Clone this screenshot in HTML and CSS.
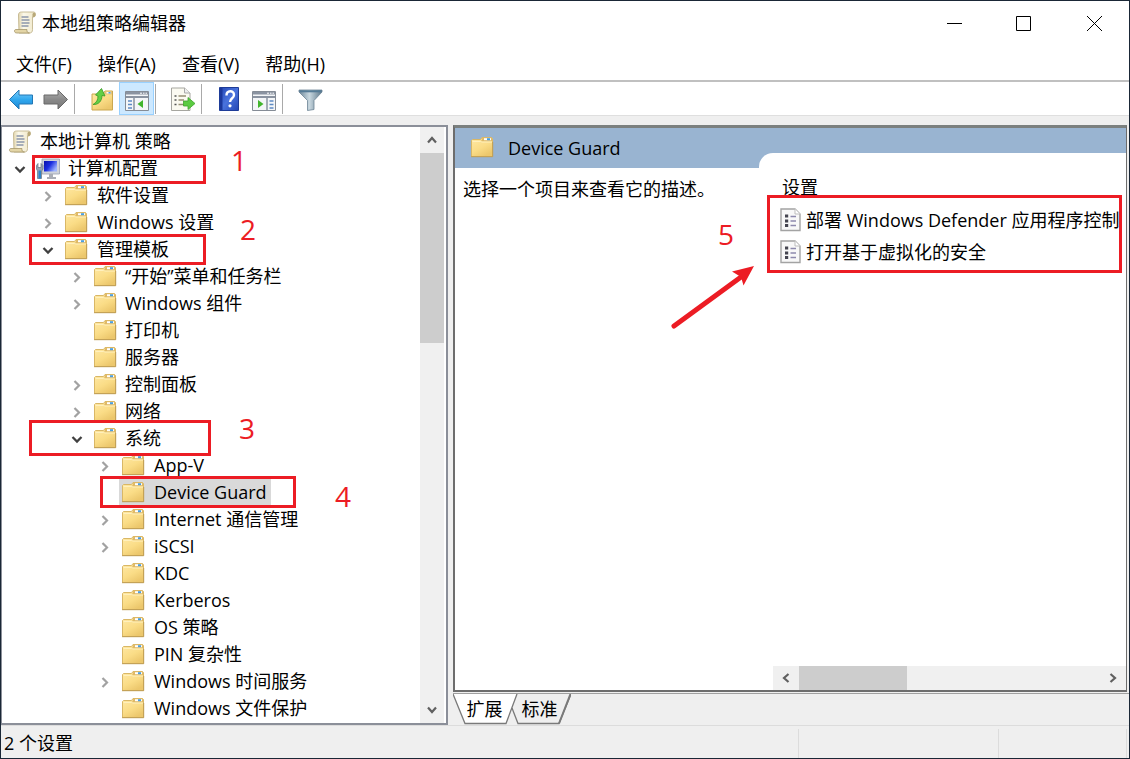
FILE: index.html
```html
<!DOCTYPE html>
<html lang="zh-CN">
<head>
<meta charset="utf-8">
<title>本地组策略编辑器</title>
<link rel="stylesheet" href="styles.css">
</head>
<body>
<svg class="defs" aria-hidden="true">
  <defs>
    <linearGradient id="gFolder" x1="0" y1="0" x2="0.6" y2="1"><stop offset="0" stop-color="#ffe9a6"/><stop offset="0.6" stop-color="#fadc86"/><stop offset="1" stop-color="#ecc76c"/></linearGradient>
    <linearGradient id="gBlue" x1="0" y1="0" x2="0" y2="1"><stop offset="0" stop-color="#7fd0fb"/><stop offset="0.5" stop-color="#31a8ee"/><stop offset="1" stop-color="#1c86d3"/></linearGradient>
    <linearGradient id="gGray" x1="0" y1="0" x2="0" y2="1"><stop offset="0" stop-color="#b0b0b0"/><stop offset="0.5" stop-color="#8a8a8a"/><stop offset="1" stop-color="#777"/></linearGradient>
    <linearGradient id="gHelp" x1="0" y1="0" x2="1" y2="1"><stop offset="0" stop-color="#2447b5"/><stop offset="0.5" stop-color="#4a73dd"/><stop offset="1" stop-color="#2346b4"/></linearGradient>
    <linearGradient id="gScreen" x1="0" y1="0" x2="1" y2="0.6"><stop offset="0" stop-color="#0810a8"/><stop offset="0.5" stop-color="#1a2ee0"/><stop offset="1" stop-color="#9db4ff"/></linearGradient>
    <linearGradient id="gFunnel" x1="0" y1="0" x2="1" y2="0"><stop offset="0" stop-color="#6d8799"/><stop offset="0.45" stop-color="#c9d8e0"/><stop offset="1" stop-color="#5d7789"/></linearGradient>
    <linearGradient id="gPaper" x1="0" y1="0" x2="1" y2="0"><stop offset="0" stop-color="#e2d6ae"/><stop offset="0.3" stop-color="#fbf8ea"/><stop offset="1" stop-color="#efe7c8"/></linearGradient>
  </defs>
  <symbol id="folder" viewBox="0 0 24 24">
    <path d="M1.500 4.500L2.500 3.500h8L12 1.500h9.500l1 1V20.500h-21z" fill="url(#gFolder)" stroke="#d9b766" stroke-width="1"/>
    <path d="M12.500 1.500h9l.5 1v3H11z" fill="#dfb967"/>
    <path d="M14 2.200h7v2h-7z" fill="#fff"/><path d="M17 2.200h3v2h-3z" fill="#4a9fe0"/>
    <path d="M2.500 5.500h8L12 6h10" fill="none" stroke="#fff0bd"/>
    <path d="M1 20.700h21.700V6" fill="none" stroke="#bf9d54" stroke-width="1"/>
  </symbol>
  <symbol id="scroll" viewBox="0 0 24 24">
    <path d="M5.500 4c0-2 1-3 3-3H21c2 .5 2 4 0 5h-1.500v12.500c0 2.500-1 3.500-3 3.500H6z" fill="url(#gPaper)" stroke="#bcae84" stroke-width="0.800"/>
    <path d="M19.500 6V3.500C19.500 1 22.500 1 22.500 3.500c0 1.500-.5 2.500-1.500 2.500z" fill="#b8a878"/>
    <path d="M1.500 20c0-1 .5-1.500 1.500-1.500h11c-.5 2 .5 3.500 2.500 3.500H4c-2 0-2.500-1-2.500-2z" fill="#e3d5a6" stroke="#a6976b" stroke-width="0.800"/>
    <path d="M8.500 6h7M8.500 9h8M8.500 12h8M8.500 15h7" stroke="#8c96aa" stroke-width="1.300"/>
  </symbol>
  <symbol id="computer" viewBox="0 0 24 24">
    <path d="M6 2h17.500v15H6z" fill="#cfd3da" stroke="#98a1b3" stroke-width="0.800"/>
    <path d="M8 4h13v10.500H8z" fill="url(#gScreen)"/>
    <path d="M13 17h4v3h3v2h-9v-2h2z" fill="#a9adb6"/>
    <path d="M.5 8.500l1.500-2v4h3v-4L7 8.500v3.500L5.500 14v7.500h-4V14L.5 12z" fill="#9aa6b3" stroke="#66727f" stroke-width="0.700"/>
    <path d="M2.500 13.500H5v8H2.500z" fill="#2f84c9"/>
  </symbol>
  <symbol id="setting" viewBox="0 0 21 24">
    <path d="M1 1h14l5 5v16.500H1z" fill="#f8f8f8" stroke="#a3a3a3" stroke-width="1.400"/>
    <path d="M15 1v5h5" fill="#fff" stroke="#bdbdbd"/>
    <path d="M5 6.500h3.200v3H5zM5 11.500h3.200v3H5zM5 16h3.200v3H5z" fill="#44444f"/>
    <path d="M10.500 8.500H16M10.500 13H16M10.500 17.500H16" stroke="#8d89ad" stroke-width="1.300"/>
  </symbol>
  <symbol id="down" viewBox="0 0 16 16"><path d="M3.500 6L8 10.500 12.500 6" fill="none" stroke="#404040" stroke-width="2.300"/></symbol>
  <symbol id="right" viewBox="0 0 16 16"><path d="M5.500 4L10 8.500 5.500 13" fill="none" stroke="#a2a2a2" stroke-width="2.200"/></symbol>
  <symbol id="chev" viewBox="0 0 16 16"><path d="M4 10.500L8 6l4 4.500" fill="none" stroke="#606060" stroke-width="2.200"/></symbol>
</svg>

<div class="window">
  <header class="titlebar">
    <svg class="icon24"><use href="#scroll"/></svg>
    <h1 class="title">本地组策略编辑器</h1>
    <div class="controls">
      <button class="control" aria-label="最小化"><svg viewBox="0 0 16 16"><path d="M1 8.500h15" stroke="#000"/></svg></button>
      <button class="control" aria-label="最大化"><svg viewBox="0 0 16 16"><path d="M.5 1.500h14v14H.5z" fill="none" stroke="#000"/></svg></button>
      <button class="control" aria-label="关闭"><svg viewBox="0 0 16 16"><path d="M1 1l15 15M16 1L1 16" stroke="#000"/></svg></button>
    </div>
  </header>
  <nav class="menubar">
    <button class="menu">文件(F)</button>
    <button class="menu">操作(A)</button>
    <button class="menu">查看(V)</button>
    <button class="menu">帮助(H)</button>
  </nav>
  <div class="toolbar" role="toolbar">
    <button class="tool" aria-label="后退"><svg viewBox="0 0 26 24"><path d="M1.500 12.500L11 3v5h13.500v9H11v5z" fill="url(#gBlue)" stroke="#2377b4"/></svg></button>
    <button class="tool" aria-label="前进"><svg viewBox="0 0 26 24"><path d="M24.500 12.500L15 3v5H1v9h14v5z" fill="url(#gGray)" stroke="#686868"/></svg></button>
    <span class="divider"></span>
    <button class="tool" aria-label="上一级"><svg viewBox="0 0 26 24"><path d="M3 7h11l2-3h7.500v19H3z" fill="url(#gFolder)" stroke="#cba850"/><path d="M16 4.500h7v3h-8.500z" fill="#e5c57c"/><path d="M17.500 5h4v1.500h-4z" fill="#fff"/><path d="M19.500 5h2v1.500h-2z" fill="#4a9fe0"/><path d="M4 17.500c3.500-2 5-4.500 5-8.500L6.500 8 12.500 1.500 16 9l-3-.5C13 14 9.500 18 4 17.500z" fill="#62cf45" stroke="#379b26" stroke-width="0.800"/></svg></button>
    <button class="tool pressed" aria-label="显示/隐藏控制台树" aria-pressed="true"><svg viewBox="0 0 26 24"><path d="M1.500 4.500h23v19h-23z" fill="#f4f6f8" stroke="#858c96"/><path d="M2 5h22v2.500H2z" fill="#8a93a1"/><path d="M2 10h22" stroke="#8a93a1" stroke-width="2"/><path d="M16 6.200h2M19 6.200h1.500M21.500 6.200H23" stroke="#fff"/><path d="M10 11v12" stroke="#8a93a1" stroke-width="1.500"/><path d="M4 14h4M4 17.500h4M4 21h4" stroke="#5d8bc4" stroke-width="1.500"/><path d="M19 13v8l-5.500-4z" fill="#41b52c"/></svg></button>
    <span class="divider"></span>
    <button class="tool" aria-label="导出列表"><svg viewBox="0 0 26 24"><path d="M1.500 1h13L20 6v17.500H1.500z" fill="#fbfaf1" stroke="#a6a6a0"/><path d="M14.500 1v5H20" fill="#eee" stroke="#aaa"/><path d="M4.500 9h2M4.500 13h2M4.500 17.500h2" stroke="#555" stroke-width="1.600"/><path d="M8.500 9H16M8.500 13H14M8.500 17.500H14" stroke="#968f73" stroke-width="1.400"/><path d="M13.500 14h4.500v-3.500l7 6-7 6V19h-4.500z" fill="#5bcb41" stroke="#3fa32c" stroke-width="0.800"/></svg></button>
    <span class="divider"></span>
    <button class="tool" aria-label="帮助"><svg viewBox="0 0 26 24"><path d="M3.500.500h19v23h-19z" fill="url(#gHelp)" stroke="#1e3c98"/><path d="M4 1h2.500v22H4z" fill="#1c389c"/><path d="M10.500 8.500c0-5.500 7.500-5.500 7.500-.500 0 3.500-4 3-4 7" fill="none" stroke="#fff" stroke-width="2.400"/><circle cx="14" cy="18.800" r="1.600" fill="#fff"/></svg></button>
    <button class="tool" aria-label="显示/隐藏操作窗格"><svg viewBox="0 0 26 24"><path d="M1.500 4.500h23v19h-23z" fill="#f4f6f8" stroke="#858c96"/><path d="M2 5h22v2.500H2z" fill="#8a93a1"/><path d="M2 10h22" stroke="#8a93a1" stroke-width="2"/><path d="M16 6.200h2M19 6.200h1.500M21.500 6.200H23" stroke="#fff"/><path d="M16 11v12" stroke="#8a93a1" stroke-width="1.500"/><path d="M18.500 14h4M18.500 17.500h4M18.500 21h4" stroke="#5d8bc4" stroke-width="1.500"/><path d="M7 13v8l5.500-4z" fill="#41b52c"/></svg></button>
    <span class="divider"></span>
    <button class="tool" aria-label="筛选"><svg viewBox="0 0 26 24"><path d="M2 3h23v2l-8 8.500v9l-6.500 1v-10L2 5z" fill="url(#gFunnel)" stroke="#6d8495" stroke-width="0.800"/><path d="M2.500 3.300h22v2h-22z" fill="#557b96"/></svg></button>
  </div>

  <main class="workspace">
    <section class="tree-pane">
      <ul class="tree" role="tree">
        <li class="row root"><span class="node"><svg class="icon24"><use href="#scroll"/></svg>本地计算机 策略</span></li>
        <li class="row d1"><button class="expander" aria-label="折叠"><svg><use href="#down"/></svg></button><span class="node"><svg class="icon24"><use href="#computer"/></svg>计算机配置</span></li>
        <li class="row d2"><button class="expander" aria-label="展开"><svg><use href="#right"/></svg></button><span class="node"><svg class="icon24"><use href="#folder"/></svg>软件设置</span></li>
        <li class="row d2"><button class="expander" aria-label="展开"><svg><use href="#right"/></svg></button><span class="node"><svg class="icon24"><use href="#folder"/></svg>Windows 设置</span></li>
        <li class="row d2"><button class="expander" aria-label="折叠"><svg><use href="#down"/></svg></button><span class="node"><svg class="icon24"><use href="#folder"/></svg>管理模板</span></li>
        <li class="row d3"><button class="expander" aria-label="展开"><svg><use href="#right"/></svg></button><span class="node"><svg class="icon24"><use href="#folder"/></svg>“开始”菜单和任务栏</span></li>
        <li class="row d3"><button class="expander" aria-label="展开"><svg><use href="#right"/></svg></button><span class="node"><svg class="icon24"><use href="#folder"/></svg>Windows 组件</span></li>
        <li class="row d3"><span class="expander"></span><span class="node"><svg class="icon24"><use href="#folder"/></svg>打印机</span></li>
        <li class="row d3"><span class="expander"></span><span class="node"><svg class="icon24"><use href="#folder"/></svg>服务器</span></li>
        <li class="row d3"><button class="expander" aria-label="展开"><svg><use href="#right"/></svg></button><span class="node"><svg class="icon24"><use href="#folder"/></svg>控制面板</span></li>
        <li class="row d3"><button class="expander" aria-label="展开"><svg><use href="#right"/></svg></button><span class="node"><svg class="icon24"><use href="#folder"/></svg>网络</span></li>
        <li class="row d3"><button class="expander" aria-label="折叠"><svg><use href="#down"/></svg></button><span class="node"><svg class="icon24"><use href="#folder"/></svg>系统</span></li>
        <li class="row d4"><button class="expander" aria-label="展开"><svg><use href="#right"/></svg></button><span class="node"><svg class="icon24"><use href="#folder"/></svg>App-V</span></li>
        <li class="row d4"><span class="expander"></span><span class="node selected"><svg class="icon24"><use href="#folder"/></svg>Device Guard</span></li>
        <li class="row d4"><button class="expander" aria-label="展开"><svg><use href="#right"/></svg></button><span class="node"><svg class="icon24"><use href="#folder"/></svg>Internet 通信管理</span></li>
        <li class="row d4"><button class="expander" aria-label="展开"><svg><use href="#right"/></svg></button><span class="node"><svg class="icon24"><use href="#folder"/></svg>iSCSI</span></li>
        <li class="row d4"><span class="expander"></span><span class="node"><svg class="icon24"><use href="#folder"/></svg>KDC</span></li>
        <li class="row d4"><span class="expander"></span><span class="node"><svg class="icon24"><use href="#folder"/></svg>Kerberos</span></li>
        <li class="row d4"><span class="expander"></span><span class="node"><svg class="icon24"><use href="#folder"/></svg>OS 策略</span></li>
        <li class="row d4"><span class="expander"></span><span class="node"><svg class="icon24"><use href="#folder"/></svg>PIN 复杂性</span></li>
        <li class="row d4"><button class="expander" aria-label="展开"><svg><use href="#right"/></svg></button><span class="node"><svg class="icon24"><use href="#folder"/></svg>Windows 时间服务</span></li>
        <li class="row d4"><span class="expander"></span><span class="node"><svg class="icon24"><use href="#folder"/></svg>Windows 文件保护</span></li>
      </ul>
      <div class="vscroll">
        <button class="arrow" aria-label="向上滚动"><svg><use href="#chev"/></svg></button>
        <div class="vtrack"><div class="vthumb"></div></div>
        <button class="arrow to-down" aria-label="向下滚动"><svg><use href="#chev"/></svg></button>
      </div>
    </section>

    <section class="detail-pane">
      <div class="detail">
        <div class="summary">
          <h2 class="detail-title"><svg class="icon24"><use href="#folder"/></svg>Device Guard</h2>
          <p class="description">选择一个项目来查看它的描述。</p>
        </div>
        <div class="settings">
          <h3 class="column-head">设置</h3>
          <ul class="setting-list">
            <li class="setting"><svg><use href="#setting"/></svg>部署 Windows Defender 应用程序控制</li>
            <li class="setting"><svg><use href="#setting"/></svg>打开基于虚拟化的安全</li>
          </ul>
          <div class="hscroll">
            <button class="arrow to-left" aria-label="向左滚动"><svg><use href="#chev"/></svg></button>
            <div class="htrack"><div class="hthumb"></div></div>
            <button class="arrow to-right" aria-label="向右滚动"><svg><use href="#chev"/></svg></button>
          </div>
        </div>
      </div>
      <div class="tabs" role="tablist">
        <button class="tab active" role="tab" aria-selected="true"><svg viewBox="0 0 66 31"><path d="M0 0L12 29.500H53L64 0z" fill="#fff"/><path d="M0 0L12 29.500H53L64 0" fill="none" stroke="#7a7a7a" stroke-width="1.300"/></svg><span>扩展</span></button>
        <button class="tab" role="tab" aria-selected="false"><svg viewBox="0 0 60 31"><path d="M1 14L7 29.500H48L60 0" fill="none" stroke="#7a7a7a" stroke-width="1.300"/><path d="M48 29.500L59.500 0" fill="none" stroke="#7a7a7a" stroke-width="2"/></svg><span>标准</span></button>
      </div>
    </section>
  </main>

  <footer class="statusbar">
    <span class="status-text">2 个设置</span>
    <span class="status-cell"></span>
    <span class="status-cell narrow"></span>
  </footer>

  <div class="notes">
    <span class="box box1"></span><span class="num num1">1</span>
    <span class="box box2"></span><span class="num num2">2</span>
    <span class="box box3"></span><span class="num num3">3</span>
    <span class="box box4"></span><span class="num num4">4</span>
    <span class="box box5"></span><span class="num num5">5</span>
    <svg class="pointer" viewBox="0 0 84 64"><path d="M4 60L71 11" stroke="#ec1c24" stroke-width="5" stroke-linecap="round"/><path d="M84 0L73.500 19.500L71 11L62 5.500z" fill="#ec1c24"/></svg>
  </div>
</div>
</body>
</html>
```
FILE: styles.css
```css
* { box-sizing: border-box; }

body {
  margin: 0;
  font-family: "Open Sans", "Noto Sans CJK SC", sans-serif;
  font-size: 18px;
  line-height: 27px;
  color: #000;
}

h1, h2, h3, p, ul { margin: 0; padding: 0; font-size: 18px; font-weight: 400; list-style: none; }

button { padding: 0; border: 0; background: none; font: inherit; color: inherit; }

svg { display: block; flex: none; }

.defs { position: absolute; width: 0; height: 0; }

.icon24 { width: 24px; height: 24px; }

.window {
  position: relative;
  display: flex;
  flex-direction: column;
  height: 100vh;
  border: 1px solid #1a2736;
  background: #efefef;
  overflow: hidden;
}

/* Title, menu, toolbar */
.titlebar { display: flex; align-items: center; height: 44px; padding-left: 12px; gap: 5px; background: #fff; }
.title { flex: 1; }
.controls { display: flex; }
.control { display: flex; justify-content: center; width: 70px; }
.control svg { width: 16px; height: 16px; }

.menubar { display: flex; gap: 26px; height: 37px; padding: 6px 15px 2px; background: #fff; border-bottom: 2px solid #c0c0c0; }

.toolbar { display: flex; align-items: center; height: 34px; background: #fff; border-bottom: 1px solid #dfdfdf; padding-left: 2px; }
.tool { display: flex; align-items: center; justify-content: center; width: 35px; height: 33px; }
.tool svg { width: 26px; height: 24px; }
.pressed { background: #cce8ff; border: 1px solid #99d1ff; }
.divider { width: 1px; height: 30px; margin: 0 9px 0 1px; background: #a9a9a9; }

/* Panes */
.workspace { display: grid; grid-template-columns: 447px 1fr; gap: 5px; flex: 1; min-height: 0; padding-top: 9px; }

.tree-pane { display: flex; min-height: 0; border: 2px solid #8b8f99; border-left-width: 1px; background: #fff; }
.tree { flex: 1; min-width: 0; padding-top: 1px; overflow: hidden; }
.row { display: flex; align-items: center; height: 27px; white-space: nowrap; }
.root { padding-left: 4px; }
.d1 { padding-left: 10px; }
.d2 { padding-left: 38px; }
.d3 { padding-left: 67px; }
.d4 { padding-left: 95px; }
.expander { width: 16px; height: 16px; margin-right: 6px; }
.expander svg { width: 16px; height: 16px; }
.node { display: flex; align-items: center; gap: 8px; height: 27px; padding: 0 5px 0 2px; }
.d2 .node, .d4 .node { gap: 9px; padding-right: 4px; }
.selected { background: #d9d9d9; }

.vscroll { display: flex; flex-direction: column; width: 24px; margin-right: 2px; background: #f0f0f0; }
.arrow { display: flex; align-items: center; justify-content: center; width: 24px; height: 26px; flex: none; }
.arrow svg { width: 16px; height: 16px; }
.to-down svg { transform: rotate(180deg); }
.to-left svg { transform: rotate(270deg); }
.to-right svg { transform: rotate(90deg); }
.vtrack { flex: 1; }
.vthumb { height: 35%; background: #cdcdcd; }

.detail-pane { display: flex; flex-direction: column; min-width: 0; min-height: 0; }
.detail {
  display: grid;
  grid-template-columns: 304px 1fr;
  flex: 1;
  min-height: 0;
  margin-right: 2px;
  border: 2px solid #6d6d6d;
  border-right-width: 1px;
  border-top: 3px solid #7b807f;
  background: linear-gradient(#99b4d1 40px, #fff 40px);
}
.detail-title { display: flex; align-items: center; gap: 14px; height: 40px; padding-left: 15px; }
.description { padding: 8px 8px; }
.settings { display: flex; flex-direction: column; margin-top: 25px; min-width: 0; background: #fff; border-top-left-radius: 14px; }
.column-head { height: 27px; margin-top: 21px; padding-left: 23px; }
.setting-list { flex: 1; padding: 3px 0 0 21px; }
.setting { display: flex; align-items: center; gap: 5px; height: 32px; white-space: nowrap; }
.setting svg { width: 21px; height: 24px; }
.hscroll { display: flex; height: 24px; margin-left: 14px; background: #f0f0f0; }
.hscroll .arrow { width: 26px; height: 24px; }
.htrack { flex: 1; }
.hthumb { width: 36%; height: 24px; background: #cdcdcd; }

.tabs { display: flex; height: 32px; margin-top: 1px; border-top: 1px solid #a0a0a0; }
.tab { display: grid; place-items: center; width: 66px; height: 31px; }
.tab + .tab { width: 60px; margin-left: -8px; }
.tab svg, .tab span { grid-area: 1 / 1; }
.tab svg { width: 66px; height: 31px; }
.tab + .tab svg { width: 60px; }
.tab span { padding-right: 3px; }

.statusbar { display: flex; height: 33px; border-top: 1px solid #dcdcdc; padding-top: 3px; }
.status-text { flex: 1; padding: 1px 3px; }
.status-cell { width: 200px; border-left: 1px solid #dcdcdc; }
.narrow { width: 129px; border-right: 1px solid #dcdcdc; margin-right: 2px; }

/* Red annotations drawn over the window */
.notes { position: absolute; inset: -1px; pointer-events: none; }
.box { position: absolute; border: 3px solid #ec1c24; }
.box1 { left: 32px; top: 155px; width: 174px; height: 29px; }
.box2 { left: 29px; top: 234px; width: 177px; height: 31px; }
.box3 { left: 29px; top: 420px; width: 182px; height: 36px; }
.box4 { left: 100px; top: 476px; width: 196px; height: 32px; }
.box5 { left: 767px; top: 195px; width: 355px; height: 78px; }
.num { position: absolute; font-size: 28px; line-height: 36px; color: #ec1c24; }
.num1 { left: 231px; top: 142px; }
.num2 { left: 240px; top: 211px; }
.num3 { left: 239px; top: 410px; }
.num4 { left: 335px; top: 478px; }
.num5 { left: 718px; top: 216px; }
.pointer { position: absolute; left: 670px; top: 266px; width: 84px; height: 64px; }
```
